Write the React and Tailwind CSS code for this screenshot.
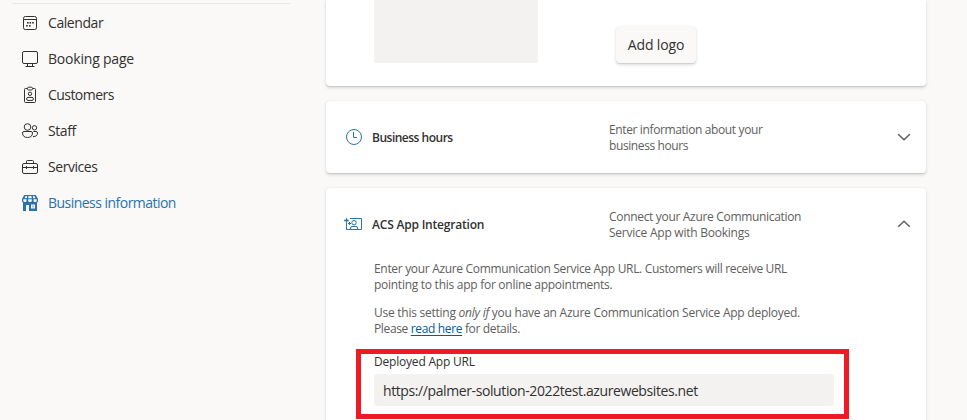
import React from "react";

const iconProps = {
  width: 18,
  height: 18,
  viewBox: "0 0 18 18",
  fill: "none",
  stroke: "currentColor",
  strokeWidth: 1,
  className: "shrink-0 overflow-visible",
};

function CalendarIcon() {
  return (
    <svg {...iconProps}>
      <rect x="2.5" y="2.5" width="13" height="13" rx="1.8" />
      <path d="M2.5 5.5h13" />
      <g fill="currentColor" stroke="none">
        <rect x="6" y="8" width="1.6" height="1.6" />
        <rect x="8.5" y="8" width="1.6" height="1.6" />
        <rect x="11.2" y="8" width="1.6" height="1.6" />
        <rect x="5.2" y="11" width="1.6" height="1.6" />
        <rect x="8" y="11" width="1.6" height="1.6" />
      </g>
    </svg>
  );
}

function MonitorIcon() {
  return (
    <svg {...iconProps}>
      <rect x="1.5" y="1.5" width="15" height="12" rx="1.5" />
      <path d="M6.5 13.5v3M11.5 13.5v3M4.5 16.5h9" />
    </svg>
  );
}

function BadgeIcon() {
  return (
    <svg {...iconProps}>
      <path d="M6.5 2.5h-2a1 1 0 0 0-1 1v12a1 1 0 0 0 1 1h9a1 1 0 0 0 1-1v-12a1 1 0 0 0-1-1h-2" />
      <rect x="6.5" y="1.2" width="5" height="2.8" rx="1.2" />
      <circle cx="9" cy="7.8" r="1.7" />
      <rect x="5.6" y="11.4" width="6.8" height="3" rx="1.4" />
    </svg>
  );
}

function StaffIcon() {
  return (
    <svg {...iconProps}>
      <circle cx="6.5" cy="5" r="3.3" />
      <circle cx="13.5" cy="5.8" r="2.2" />
      <path d="M3 9.5h7a1.5 1.5 0 0 1 1.5 1.5c0 3-2 4.500-5 4.500s-5-1.500-5-4.500A1.500 1.500 0 0 1 3 9.500z" />
      <path d="M12.300 9.500H15a1.500 1.500 0 0 1 1.500 1.500c0 2.500-1.600 3.600-4.500 3.600" />
    </svg>
  );
}

function BriefcaseIcon() {
  return (
    <svg {...iconProps}>
      <rect x="1.5" y="5.5" width="15" height="10" rx="1.5" />
      <path d="M5.5 5.5v-2a1 1 0 0 1 1-1h5a1 1 0 0 1 1 1v2M1.5 9.5h15M5.5 8v3M12.5 8v3" />
    </svg>
  );
}

function ShopIcon() {
  return (
    <svg {...iconProps}>
      <path
        d="M3.200 1h11.600L17 5v1.500c0 1-.4 1.600-1 2V17H2V8.500c-.6-.4-1-1-1-2V5z"
        fill="currentColor"
        stroke="none"
      />
      <path
        d="M2.300 5.300h3.200v1.400c0 .8-.6 1.300-1.600 1.300s-1.600-.5-1.600-1.300zM7.200 5.300h3.600v1.400c0 .8-.7 1.300-1.800 1.300s-1.800-.5-1.800-1.300zM12.500 5.300h3.200v1.400c0 .8-.6 1.300-1.600 1.300s-1.600-.5-1.600-1.300zM4.600 2h1.600l-.5 2.200H3.500zM7.600 2h2.800l.4 2.200H7.200zM11.800 2h1.600l1.100 2.200h-2.200zM5 11h3v6H5zM10 10.500h4v4h-4z"
        fill="#faf9f8"
        stroke="none"
      />
      <rect x="11" y="11.5" width="2" height="2" fill="currentColor" stroke="none" opacity="0.4" />
    </svg>
  );
}

function ClockIcon() {
  return (
    <svg {...iconProps}>
      <circle cx="9" cy="9" r="7.5" />
      <path d="M8.5 4v5.500H12" />
    </svg>
  );
}

function PersonCardIcon() {
  return (
    <svg {...iconProps}>
      <path d="M5 3.500h11.500v11h-15V8" />
      <path d="M1.500 3.200v4.600M-.8 5.500h4.600" strokeWidth="1.300" />
      <path d="M4.500 7v3M3 8.500h3" />
      <circle cx="9" cy="7.700" r="2.200" />
      <path d="M5.500 14.500v-1.500a1.500 1.500 0 0 1 1.500-1.500h4a1.500 1.500 0 0 1 1.500 1.500v1.500" />
    </svg>
  );
}

function Chevron({ up }) {
  return (
    <svg width="14" height="8" viewBox="0 0 14 8" fill="none" stroke="#605e5c" strokeWidth="1.5" className="shrink-0">
      <path d={up ? "M1.2 6.8L7 1.2l5.8 5.600" : "M1.200 1.200L7 6.800l5.800-5.600"} />
    </svg>
  );
}

const navItems = [
  { label: "Calendar", Icon: CalendarIcon, tracking: "tracking-[-0.42px]" },
  { label: "Booking page", Icon: MonitorIcon, tracking: "tracking-[-0.2px]" },
  { label: "Customers", Icon: BadgeIcon, tracking: "tracking-[-0.55px]" },
  { label: "Staff", Icon: StaffIcon, tracking: "tracking-[-0.4px]" },
  { label: "Services", Icon: BriefcaseIcon, tracking: "tracking-[-0.45px]" },
  { label: "Business information", Icon: ShopIcon, tracking: "tracking-[-0.53px]", active: true },
];

const cardShadow = "shadow-[0_1.6px_3.6px_rgba(0,0,0,0.13),0_0.3px_0.9px_rgba(0,0,0,0.1)]";

function CardHeader({ Icon, title, titleTracking, lines, up }) {
  return (
    <div className="flex h-[72px] items-center pl-[19px] pr-[15px]">
      <span className="flex w-[27px] text-[#2a72a8]">
        <Icon />
      </span>
      <h2 className={"w-[237px] whitespace-nowrap pt-[2px] text-[12px] font-semibold leading-4 text-[#323130] " + titleTracking}>
        {title}
      </h2>
      <p className="grow whitespace-nowrap pt-[2px] text-[12px] leading-4 text-[#605e5c]">
        {lines.map(([text, tracking]) => (
          <span key={text} className={"block " + tracking}>
            {text}
          </span>
        ))}
      </p>
      <Chevron up={up} />
    </div>
  );
}

export default function App() {
  return (
    <div className="flex h-[420px] w-[967px] overflow-hidden bg-[#faf9f8] font-['Open_Sans','Noto_Sans',sans-serif] text-[#323130]">
      <nav className="ml-3 mr-9 mt-[3px] w-[278px] border-t border-[#e9e7e6] pt-px">
        {navItems.map(({ label, Icon, tracking, active }) => (
          <a
            key={label}
            className={"flex h-9 items-center gap-[9px] pl-[9px] text-[14px] leading-5 " + (active ? "text-[#2a72a8]" : "")}
          >
            <Icon />
            <span className={"whitespace-nowrap " + tracking}>{label}</span>
          </a>
        ))}
      </nav>

      <main className="flex w-[600px] flex-col gap-[15px]">
        <section className={"flex h-[86px] shrink-0 items-start rounded-b bg-white pl-12 " + cardShadow}>
          <div className="h-[63px] w-[164px] bg-[#f3f2f1]" />
          <button className="ml-[78px] mt-[27px] h-9 w-20 whitespace-nowrap rounded bg-[#faf9f8] text-[14px] leading-5 tracking-[-0.15px] shadow-[0_1.6px_3.6px_rgba(0,0,0,0.13),0_0.3px_0.9px_rgba(0,0,0,0.1)]">
            Add logo
          </button>
        </section>

        <section className={"h-[72px] shrink-0 rounded bg-white " + cardShadow}>
          <CardHeader
            Icon={ClockIcon}
            title="Business hours"
            titleTracking="tracking-[-0.5px]"
            lines={[
              ["Enter information about your", "tracking-[-0.37px]"],
              ["business hours", "tracking-[-0.4px]"],
            ]}
          />
        </section>

        <section className={"h-[260px] shrink-0 rounded bg-white " + cardShadow}>
          <CardHeader
            Icon={PersonCardIcon}
            title="ACS App Integration"
            titleTracking="tracking-[-0.2px]"
            lines={[
              ["Connect your Azure Communication", "tracking-[-0.32px]"],
              ["Service App with Bookings", "tracking-[-0.24px]"],
            ]}
            up
          />
          <div className="whitespace-nowrap pl-12 text-[12px] leading-4 text-[#605e5c]">
            <p className="pt-[1px]">
              <span className="block tracking-[-0.32px]">
                Enter your Azure Communication Service App URL. Customers will receive URL
              </span>
              <span className="block tracking-[-0.27px]">pointing to this app for online appointments.</span>
            </p>
            <p className="mt-3">
              <span className="block tracking-[-0.25px]">
                Use this setting <em>only if</em> you have an Azure Communication Service App deployed.
              </span>
              <span className="block tracking-[-0.35px]">
                Please <a className="text-[#005a9e] underline underline-offset-2">read here</a> for details.
              </span>
            </p>
          </div>
          <div className="ml-[30px] mt-3 h-[70px] w-[493px] border-[5px] border-[#ed1c24] px-[13px]">
            <div className="text-[12px] leading-4 tracking-[-0.2px]">Deployed App URL</div>
            <div className="mt-[4px] flex h-8 w-[460px] items-center rounded-[3px] bg-[#f3f2f1] pl-[9px] pt-px text-[14px] leading-5 tracking-[-0.4px]">
              https://palmer-solution-2022test.azurewebsites.net
            </div>
          </div>
        </section>
      </main>
    </div>
  );
}
